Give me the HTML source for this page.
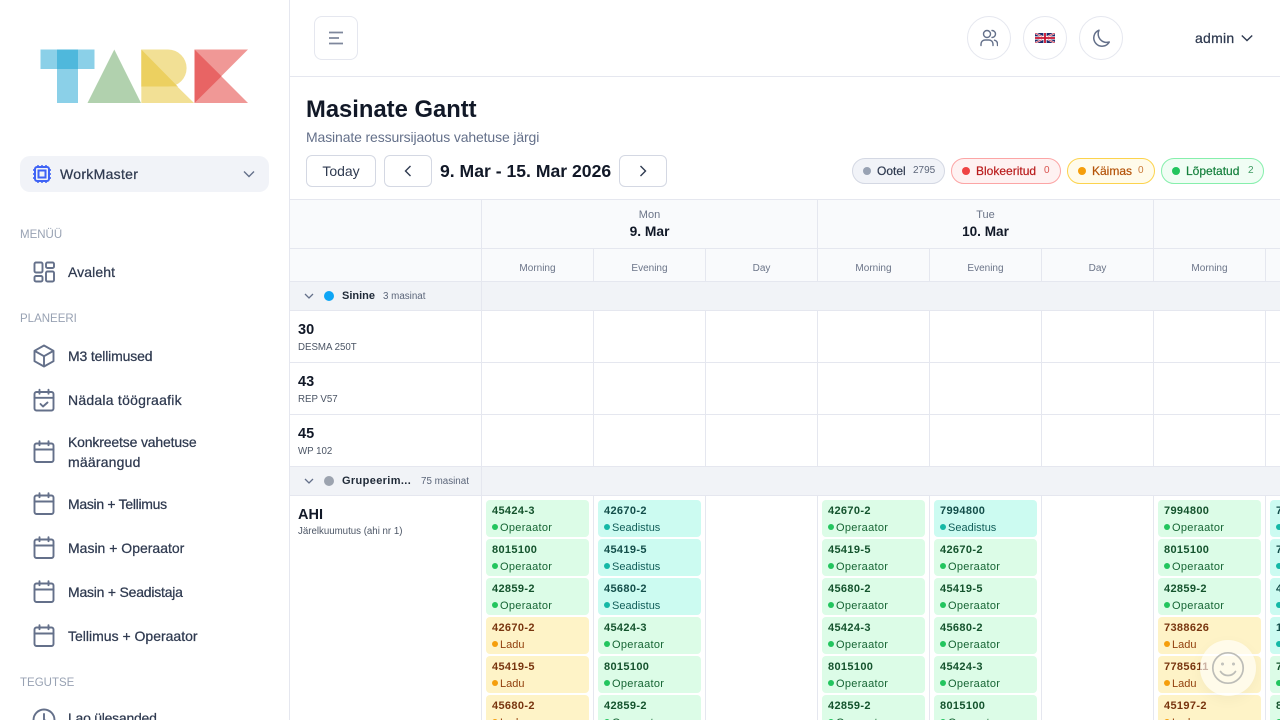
<!DOCTYPE html>
<html lang="et"><head><meta charset="utf-8"><title>Masinate Gantt</title>
<style>
*{box-sizing:border-box;margin:0;padding:0}
html,body{width:1280px;height:720px;overflow:hidden;background:#fff;font-family:"Liberation Sans",sans-serif}
.a{position:absolute;white-space:nowrap}
#root{position:relative;width:1280px;height:720px;overflow:hidden}
.lb{left:20px;font-size:11.5px;line-height:16px;color:#98a2b3;margin-top:1px}
.ni{left:68px;font-size:14px;line-height:20px;color:#2f3a50;-webkit-text-stroke:.25px #2f3a50}
.ic{position:absolute;left:32px;width:24px;height:24px;fill:none;stroke:#64708a;stroke-width:1.9;stroke-linecap:round;stroke-linejoin:round}
.l{position:absolute;background:#e5e7ef}
.btn{position:absolute;border:1px solid #d4d8e3;border-radius:6px;background:#fff}
.circ{position:absolute;top:16px;width:44px;height:44px;border:1px solid #e5e7ef;border-radius:50%;background:#fff}
.chip{position:absolute;top:158px;height:26px;border-radius:13px;border:1px solid;font-size:12px;line-height:24px;white-space:nowrap}
.chip i{position:absolute;left:10px;top:8px;width:8px;height:8px;border-radius:50%}
.chip b{position:absolute;left:24px;top:0;font-weight:normal;-webkit-text-stroke:.2px currentColor}
.chip s{position:absolute;top:0;text-decoration:none;font-size:10px}
.sh{position:absolute;top:249px;width:111px;height:32px;text-align:center;font-size:10px;line-height:39px;color:#6b7488}
.cd{position:absolute;width:103px;height:37px;border-radius:4px;overflow:hidden}
.cd b{position:absolute;left:6px;top:4px;font-size:11px;line-height:14px;letter-spacing:.35px}
.cd span{position:absolute;left:14px;top:21px;font-size:11px;line-height:14px}
.g span{letter-spacing:.3px}
.cd i{position:absolute;left:6px;top:24px;width:6px;height:6px;border-radius:50%}
.g{background:#dcfce7}.g b{color:#14532d}.g span{color:#166534}.g i{background:#22c55e}
.t{background:#ccfbf1}.t b{color:#134e4a}.t span{color:#115e59}.t i{background:#14b8a6}
.y{background:#fef3c7}.y b{color:#78350f}.y span{color:#92400e}.y i{background:#f59e0b}
.mn{left:298px;font-size:14.5px;font-weight:bold;line-height:18px;color:#111827;margin-top:1px}
.ms{left:298px;font-size:9.7px;line-height:12px;color:#4b5565;margin-top:1px}
.gr{position:absolute;left:290px;width:990px;height:28px;background:#f1f3f7}
</style></head><body><div id="root">

<!-- sidebar -->
<div class="l" style="left:289px;top:0;width:1px;height:720px"></div>
<svg class="a" style="left:0;top:0" width="290" height="120" viewBox="0 0 290 120">
<rect x="40.5" y="49.5" width="54" height="19.5" fill="#8bd0e8"/>
<rect x="57" y="49.5" width="21" height="53.5" fill="#8bd0e8"/>
<rect x="57" y="49.5" width="21" height="19.5" fill="#4fb8dc"/>
<path d="M114.3 49.5L141 103H87.5z" fill="#b1d1ae"/>
<path d="M141.3 49.5H168a18.6 18.6 0 0 1 0 37.2h-26.7z" fill="#f2e095"/>
<path d="M141.3 49.5L178 86.7H141.3z" fill="#ecd060"/>
<path d="M141.3 86.7H177.5L194 103H141.3z" fill="#f2e095"/>
<path d="M194.5 49.5H248L194.5 103z" fill="#f09896"/>
<path d="M194.5 49.5L248 103H194.5z" fill="#f09896"/>
<path d="M194.5 49.5L221.5 76.2 194.5 103z" fill="#e86464"/>
</svg>
<div class="a" style="left:20px;top:156px;width:249px;height:36px;background:#f1f3f8;border-radius:10px"></div>
<svg class="a" style="left:33px;top:165px;fill:none;stroke:#3f63f5;stroke-width:2" width="18" height="18" viewBox="0 0 18 18">
<rect x="2" y="2" width="14" height="14" rx="2"/><rect x="5.5" y="5.5" width="7" height="7"/>
<path d="M5 .2V2M9 .2V2M13 .2V2M5 16v1.8M9 16v1.8M13 16v1.8M.2 5H2M.2 9H2M.2 13H2M16 5h1.8M16 9h1.8M16 13h1.8"/></svg>
<div class="a ni" style="left:60px;top:164px;letter-spacing:.3px">WorkMaster</div>
<svg class="a" style="left:243px;top:168px;fill:none;stroke:#64708a;stroke-width:1.4" width="12" height="12" viewBox="0 0 12 12"><path d="M1 3.5l5 5 5-5"/></svg>

<div class="a lb" style="top:226px">MENÜÜ</div>
<svg class="ic" style="top:260px" viewBox="0 0 24 24"><rect x="2.5" y="2.5" width="8" height="10" rx="1.5"/><rect x="14" y="2.5" width="8" height="5.5" rx="1.5"/><rect x="14" y="11.5" width="8" height="10" rx="1.5"/><rect x="2.5" y="16" width="8" height="5.5" rx="1.5"/></svg>
<div class="a ni" style="top:262px;letter-spacing:.1px">Avaleht</div>

<div class="a lb" style="top:310px">PLANEERI</div>
<svg class="ic" style="top:344px" viewBox="0 0 24 24"><path d="M12 1.5l9.5 5.3v10.4L12 22.5l-9.500-5.300V6.800zM2.800 7l9.200 5.200L21.200 7M12 12.200v10"/></svg>
<div class="a ni" style="top:346px;letter-spacing:-.15px">M3 tellimused</div>
<svg class="ic" style="top:388px" viewBox="0 0 24 24"><rect x="2.500" y="4" width="19" height="18.500" rx="2"/><path d="M2.500 9.800h19M7.500 1.700v4M16.500 1.700v4M8.500 16l2.500 2.500 4.500-4"/></svg>
<div class="a ni" style="top:390px;letter-spacing:.24px">Nädala töögraafik</div>
<svg class="ic" style="top:440px" viewBox="0 0 24 24"><rect x="2.500" y="3.500" width="19" height="18.500" rx="2"/><path d="M2.500 9.500h19M7.500 1.200v4M16.500 1.200v4"/></svg>
<div class="a ni" style="top:432px;letter-spacing:-.16px">Konkreetse vahetuse</div>
<div class="a ni" style="top:452px;letter-spacing:.2px">määrangud</div>
<svg class="ic" style="top:492px" viewBox="0 0 24 24"><rect x="2.500" y="3.500" width="19" height="18.500" rx="2"/><path d="M2.500 9.500h19M7.500 1.200v4M16.500 1.200v4"/></svg>
<div class="a ni" style="top:494px;letter-spacing:-.3px">Masin + Tellimus</div>
<svg class="ic" style="top:536px" viewBox="0 0 24 24"><rect x="2.500" y="3.500" width="19" height="18.500" rx="2"/><path d="M2.500 9.500h19M7.500 1.200v4M16.500 1.200v4"/></svg>
<div class="a ni" style="top:538px">Masin + Operaator</div>
<svg class="ic" style="top:580px" viewBox="0 0 24 24"><rect x="2.500" y="3.500" width="19" height="18.500" rx="2"/><path d="M2.500 9.500h19M7.500 1.200v4M16.500 1.200v4"/></svg>
<div class="a ni" style="top:582px;letter-spacing:-.22px">Masin + Seadistaja</div>
<svg class="ic" style="top:624px" viewBox="0 0 24 24"><rect x="2.500" y="3.500" width="19" height="18.500" rx="2"/><path d="M2.500 9.500h19M7.500 1.200v4M16.500 1.200v4"/></svg>
<div class="a ni" style="top:626px">Tellimus + Operaator</div>
<div class="a lb" style="top:674px">TEGUTSE</div>
<svg class="ic" style="top:708px" viewBox="0 0 24 24"><circle cx="12" cy="12" r="10.500"/><path d="M12 6v6l4 2"/></svg>
<div class="a ni" style="top:708px;letter-spacing:-.25px">Lao ülesanded</div>

<!-- header -->
<div class="l" style="left:290px;top:76px;width:990px;height:1px"></div>
<div class="btn" style="left:314px;top:16px;width:44px;height:44px;border-radius:8px;border-color:#e5e7ef"></div>
<svg class="a" style="left:328px;top:31px;fill:none;stroke:#7e879c;stroke-width:1.700" width="16" height="14" viewBox="0 0 16 14"><path d="M1 1.500h14M1 7h10M1 12.500h14"/></svg>
<div class="circ" style="left:967px"></div><div class="circ" style="left:1023px"></div><div class="circ" style="left:1079px"></div>
<svg class="a" style="left:980px;top:29px;fill:none;stroke:#64708a;stroke-width:1.400;stroke-linecap:round" width="18" height="18" viewBox="0 0 18 18"><circle cx="7" cy="5" r="3.500"/><path d="M1 16.500v-1.500a4 4 0 0 1 4-4h4a4 4 0 0 1 4 4v1.500M12 1.500a3.500 3.500 0 0 1 0 7M14.500 11.200a4 4 0 0 1 3 3.800v1.500"/></svg>
<svg class="a" style="left:1035px;top:33px" width="20" height="10" viewBox="0 0 20 10"><rect width="20" height="10" fill="#1f2a6b"/><path d="M0 0L20 10M20 0L0 10" stroke="#fff" stroke-width="1.800"/><path d="M0 0L20 10M20 0L0 10" stroke="#c8102e" stroke-width=".7"/><path d="M10 0V10M0 5H20" stroke="#fff" stroke-width="3.200"/><path d="M10 0V10M0 5H20" stroke="#c8102e" stroke-width="1.800"/></svg>
<svg class="a" style="left:1091px;top:29px;fill:none;stroke:#64708a;stroke-width:1.500;stroke-linejoin:round" width="20" height="19" viewBox="0 0 20 19"><path d="M8 1.200a8.300 8.300 0 1 0 10.300 11.800A8.500 8.500 0 0 1 8 1.200z"/></svg>
<div class="a" style="left:1195px;top:29px;font-size:14px;line-height:18px;color:#2f3a50;letter-spacing:.25px;-webkit-text-stroke:.25px #2f3a50">admin</div>
<svg class="a" style="left:1241px;top:32px;fill:none;stroke:#2f3a50;stroke-width:1.400" width="12" height="12" viewBox="0 0 12 12"><path d="M.8 3.500L6 8.500l5.200-5"/></svg>

<!-- title -->
<div class="a" style="left:306px;top:95px;font-size:23.8px;line-height:30px;font-weight:bold;color:#111827">Masinate Gantt</div>
<div class="a" style="left:306px;top:128px;font-size:14px;line-height:18px;color:#64708a;letter-spacing:-.13px">Masinate ressursijaotus vahetuse järgi</div>
<div class="btn" style="left:306px;top:155px;width:70px;height:32px;text-align:center;font-size:14px;line-height:30px;color:#2f3a50">Today</div>
<div class="btn" style="left:384px;top:155px;width:48px;height:32px"></div>
<svg class="a" style="left:402px;top:165px;fill:none;stroke:#2f3a50;stroke-width:1.400" width="12" height="12" viewBox="0 0 12 12"><path d="M8.500 1L3.500 6l5 5"/></svg>
<div class="a" style="left:440px;top:159px;font-size:17.6px;line-height:24px;font-weight:bold;color:#111827">9. Mar - 15. Mar 2026</div>
<div class="btn" style="left:619px;top:155px;width:48px;height:32px"></div>
<svg class="a" style="left:637px;top:165px;fill:none;stroke:#2f3a50;stroke-width:1.400" width="12" height="12" viewBox="0 0 12 12"><path d="M3.500 1L8.500 6l-5 5"/></svg>

<div class="chip" style="left:852px;width:93px;background:#f1f3f8;border-color:#d4d8e3;color:#2f3a50"><i style="background:#98a2b3"></i><b>Ootel</b><s style="left:60px;color:#5c667a">2795</s></div>
<div class="chip" style="left:951px;width:110px;background:#fef2f2;border-color:#fca5a5;color:#b91c1c"><i style="background:#ef4444"></i><b>Blokeeritud</b><s style="left:92px;color:#d9534f">0</s></div>
<div class="chip" style="left:1067px;width:88px;background:#fffbeb;border-color:#fcd34d;color:#b45309"><i style="background:#f59e0b"></i><b>Käimas</b><s style="left:70px;color:#c9793a">0</s></div>
<div class="chip" style="left:1161px;width:103px;background:#f0fdf4;border-color:#86efac;color:#15803d"><i style="background:#22c55e"></i><b>Lõpetatud</b><s style="left:86px;color:#3f9a62">2</s></div>

<!-- gantt -->
<div class="a" style="left:290px;top:200px;width:990px;height:81px;background:#f9fafc"></div>
<div class="gr" style="top:282px"></div>
<div class="gr" style="top:467px"></div>

<div class="l" style="left:290px;top:199px;width:990px;height:1px"></div>
<div class="l" style="left:290px;top:248px;width:990px;height:1px"></div>
<div class="l" style="left:290px;top:281px;width:990px;height:1px"></div>
<div class="l" style="left:290px;top:310px;width:990px;height:1px"></div>
<div class="l" style="left:290px;top:362px;width:990px;height:1px"></div>
<div class="l" style="left:290px;top:414px;width:990px;height:1px"></div>
<div class="l" style="left:290px;top:466px;width:990px;height:1px"></div>
<div class="l" style="left:290px;top:495px;width:990px;height:1px"></div>

<div class="l" style="left:481px;top:200px;width:1px;height:520px"></div>
<div class="l" style="left:817px;top:200px;width:1px;height:82px"></div>
<div class="l" style="left:1153px;top:200px;width:1px;height:82px"></div>
<div class="l" style="left:593px;top:249px;width:1px;height:32px"></div><div class="l" style="left:705px;top:249px;width:1px;height:32px"></div>
<div class="l" style="left:929px;top:249px;width:1px;height:32px"></div><div class="l" style="left:1041px;top:249px;width:1px;height:32px"></div>
<div class="l" style="left:1265px;top:249px;width:1px;height:32px"></div>
<div class="l" style="left:593px;top:311px;width:1px;height:155px"></div><div class="l" style="left:705px;top:311px;width:1px;height:155px"></div><div class="l" style="left:817px;top:311px;width:1px;height:155px"></div><div class="l" style="left:929px;top:311px;width:1px;height:155px"></div><div class="l" style="left:1041px;top:311px;width:1px;height:155px"></div><div class="l" style="left:1153px;top:311px;width:1px;height:155px"></div><div class="l" style="left:1265px;top:311px;width:1px;height:155px"></div>
<div class="l" style="left:593px;top:496px;width:1px;height:224px"></div><div class="l" style="left:705px;top:496px;width:1px;height:224px"></div><div class="l" style="left:817px;top:496px;width:1px;height:224px"></div><div class="l" style="left:929px;top:496px;width:1px;height:224px"></div><div class="l" style="left:1041px;top:496px;width:1px;height:224px"></div><div class="l" style="left:1153px;top:496px;width:1px;height:224px"></div><div class="l" style="left:1265px;top:496px;width:1px;height:224px"></div>

<div class="a" style="left:482px;top:208px;width:335px;text-align:center;font-size:11px;line-height:14px;color:#6b7488">Mon</div>
<div class="a" style="left:482px;top:224px;width:335px;text-align:center;font-size:13.8px;line-height:16px;font-weight:bold;color:#111827">9. Mar</div>
<div class="a" style="left:818px;top:208px;width:335px;text-align:center;font-size:11px;line-height:14px;color:#6b7488">Tue</div>
<div class="a" style="left:818px;top:224px;width:335px;text-align:center;font-size:13.6px;line-height:16px;font-weight:bold;color:#111827">10. Mar</div>

<div class="sh" style="left:482px">Morning</div><div class="sh" style="left:594px">Evening</div><div class="sh" style="left:706px">Day</div>
<div class="sh" style="left:818px">Morning</div><div class="sh" style="left:930px">Evening</div><div class="sh" style="left:1042px">Day</div>
<div class="sh" style="left:1154px">Morning</div>

<svg class="a" style="left:304px;top:291px;fill:none;stroke:#64708a;stroke-width:1.300" width="10" height="10" viewBox="0 0 10 10"><path d="M1 3l4 4 4-4"/></svg>
<div class="a" style="left:324px;top:291px;width:10px;height:10px;border-radius:50%;background:#0ea5f5"></div>
<div class="a" style="left:342px;top:289px;font-size:11px;line-height:14px;font-weight:bold;color:#1f2937">Sinine</div>
<div class="a" style="left:383px;top:290px;font-size:9.8px;line-height:14px;color:#5c667a">3 masinat</div>

<svg class="a" style="left:304px;top:476px;fill:none;stroke:#64708a;stroke-width:1.300" width="10" height="10" viewBox="0 0 10 10"><path d="M1 3l4 4 4-4"/></svg>
<div class="a" style="left:324px;top:476px;width:10px;height:10px;border-radius:50%;background:#9ca3af"></div>
<div class="a" style="left:342px;top:474px;font-size:11px;line-height:14px;font-weight:bold;color:#1f2937;letter-spacing:.36px">Grupeerim...</div>
<div class="a" style="left:421px;top:475px;font-size:9.8px;line-height:14px;color:#5c667a">75 masinat</div>

<div class="a mn" style="top:320px">30</div><div class="a ms" style="top:341px">DESMA 250T</div>
<div class="a mn" style="top:372px">43</div><div class="a ms" style="top:393px">REP V57</div>
<div class="a mn" style="top:424px">45</div><div class="a ms" style="top:445px">WP 102</div>
<div class="a mn" style="top:505px">AHI</div><div class="a ms" style="top:525px">Järelkuumutus (ahi nr 1)</div>

<!-- col 1 -->
<div class="cd g" style="left:486px;top:500px"><b>45424-3</b><i></i><span>Operaator</span></div>
<div class="cd g" style="left:486px;top:539px"><b>8015100</b><i></i><span>Operaator</span></div>
<div class="cd g" style="left:486px;top:578px"><b>42859-2</b><i></i><span>Operaator</span></div>
<div class="cd y" style="left:486px;top:617px"><b>42670-2</b><i></i><span>Ladu</span></div>
<div class="cd y" style="left:486px;top:656px"><b>45419-5</b><i></i><span>Ladu</span></div>
<div class="cd y" style="left:486px;top:695px"><b>45680-2</b><i></i><span>Ladu</span></div>
<!-- col 2 -->
<div class="cd t" style="left:598px;top:500px"><b>42670-2</b><i></i><span>Seadistus</span></div>
<div class="cd t" style="left:598px;top:539px"><b>45419-5</b><i></i><span>Seadistus</span></div>
<div class="cd t" style="left:598px;top:578px"><b>45680-2</b><i></i><span>Seadistus</span></div>
<div class="cd g" style="left:598px;top:617px"><b>45424-3</b><i></i><span>Operaator</span></div>
<div class="cd g" style="left:598px;top:656px"><b>8015100</b><i></i><span>Operaator</span></div>
<div class="cd g" style="left:598px;top:695px"><b>42859-2</b><i></i><span>Operaator</span></div>
<!-- col 4 -->
<div class="cd g" style="left:822px;top:500px"><b>42670-2</b><i></i><span>Operaator</span></div>
<div class="cd g" style="left:822px;top:539px"><b>45419-5</b><i></i><span>Operaator</span></div>
<div class="cd g" style="left:822px;top:578px"><b>45680-2</b><i></i><span>Operaator</span></div>
<div class="cd g" style="left:822px;top:617px"><b>45424-3</b><i></i><span>Operaator</span></div>
<div class="cd g" style="left:822px;top:656px"><b>8015100</b><i></i><span>Operaator</span></div>
<div class="cd g" style="left:822px;top:695px"><b>42859-2</b><i></i><span>Operaator</span></div>
<!-- col 5 -->
<div class="cd t" style="left:934px;top:500px"><b>7994800</b><i></i><span>Seadistus</span></div>
<div class="cd g" style="left:934px;top:539px"><b>42670-2</b><i></i><span>Operaator</span></div>
<div class="cd g" style="left:934px;top:578px"><b>45419-5</b><i></i><span>Operaator</span></div>
<div class="cd g" style="left:934px;top:617px"><b>45680-2</b><i></i><span>Operaator</span></div>
<div class="cd g" style="left:934px;top:656px"><b>45424-3</b><i></i><span>Operaator</span></div>
<div class="cd g" style="left:934px;top:695px"><b>8015100</b><i></i><span>Operaator</span></div>
<!-- col 7 -->
<div class="cd g" style="left:1158px;top:500px"><b>7994800</b><i></i><span>Operaator</span></div>
<div class="cd g" style="left:1158px;top:539px"><b>8015100</b><i></i><span>Operaator</span></div>
<div class="cd g" style="left:1158px;top:578px"><b>42859-2</b><i></i><span>Operaator</span></div>
<div class="cd y" style="left:1158px;top:617px"><b>7388626</b><i></i><span>Ladu</span></div>
<div class="cd y" style="left:1158px;top:656px"><b>7785611</b><i></i><span>Ladu</span></div>
<div class="cd y" style="left:1158px;top:695px"><b>45197-2</b><i></i><span>Ladu</span></div>
<!-- col 8 -->
<div class="cd t" style="left:1270px;top:500px"><b>7994800</b><i></i><span>Seadistus</span></div>
<div class="cd t" style="left:1270px;top:539px"><b>7388626</b><i></i><span>Seadistus</span></div>
<div class="cd t" style="left:1270px;top:578px"><b>42859-2</b><i></i><span>Seadistus</span></div>
<div class="cd t" style="left:1270px;top:617px"><b>1234567</b><i></i><span>Seadistus</span></div>
<div class="cd g" style="left:1270px;top:656px"><b>7785611</b><i></i><span>Operaator</span></div>
<div class="cd g" style="left:1270px;top:695px"><b>8015100</b><i></i><span>Operaator</span></div>

<!-- feedback -->
<div class="a" style="left:1200px;top:640px;width:56px;height:56px;border-radius:50%;background:rgba(255,255,255,.62);box-shadow:0 4px 14px rgba(0,0,0,.04)"></div>
<svg class="a" style="left:1211px;top:651px;fill:none;stroke:#bdbdb8;stroke-width:1.700;stroke-linecap:round" width="34" height="34" viewBox="0 0 34 34"><circle cx="17" cy="17" r="15.200"/><path d="M9.500 20.500c2 3 4.500 4 7.500 4s5.500-1 7.500-4"/><circle cx="11.500" cy="13" r=".6"/><circle cx="22.500" cy="13" r=".6"/></svg>
</div></body></html>
